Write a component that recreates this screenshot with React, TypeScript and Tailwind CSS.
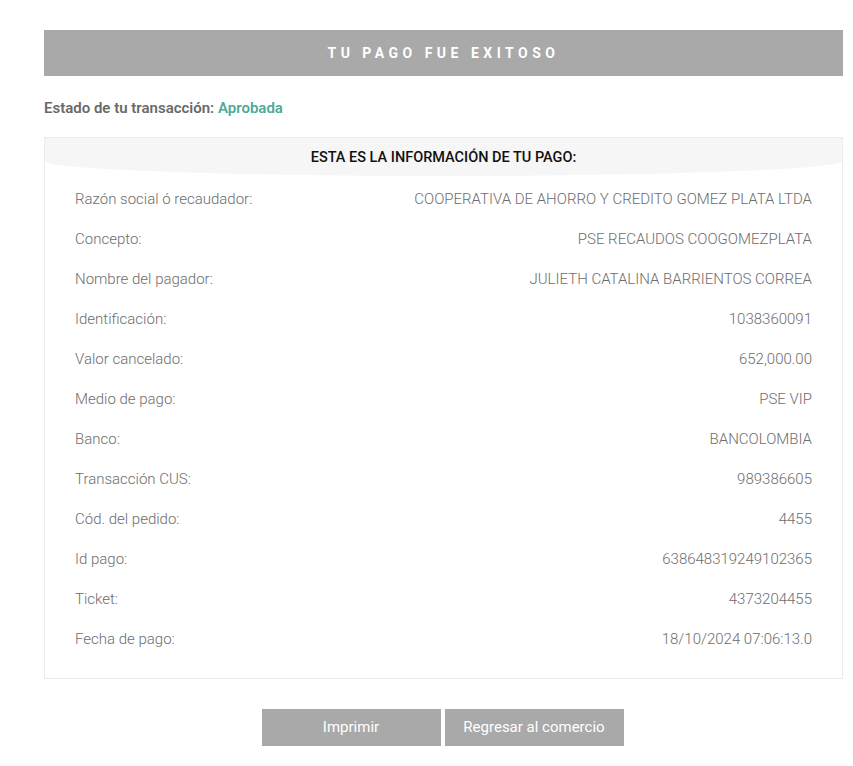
const rows: [string, string][] = [
  ['Razón social ó recaudador:', 'COOPERATIVA DE AHORRO Y CREDITO GOMEZ PLATA LTDA'],
  ['Concepto:', 'PSE RECAUDOS COOGOMEZPLATA'],
  ['Nombre del pagador:', 'JULIETH CATALINA BARRIENTOS CORREA'],
  ['Identificación:', '1038360091'],
  ['Valor cancelado:', '652,000.00'],
  ['Medio de pago:', 'PSE VIP'],
  ['Banco:', 'BANCOLOMBIA'],
  ['Transacción CUS:', '989386605'],
  ['Cód. del pedido:', '4455'],
  ['Id pago:', '638648319249102365'],
  ['Ticket:', '4373204455'],
  ['Fecha de pago:', '18/10/2024 07:06:13.0'],
]

export default function App() {
  return (
    <div className="min-h-screen bg-white font-['Roboto',sans-serif] text-[#6d6d6d]">
      <div className="ml-[44px] w-[799px] pt-[30px] pb-[20px]">
        {/* Banner */}
        <div className="h-[46px] bg-[#a9a9a9] flex items-center justify-center">
          <h1 className="text-white text-[14px] font-bold tracking-[4.5px]">TU PAGO FUE EXITOSO</h1>
        </div>

        <p className="mt-[21px] text-[15px] font-semibold text-[#6a6a6a]">
          Estado de tu transacción: <span className="text-[#4ea99b]">Aprobada</span>
        </p>

        {/* Info card */}
        <div className="mt-[17px] border border-[#ececec] pb-[18px]">
          <div className="h-[38px] bg-[#f6f6f6] rounded-b-[50%_15px] flex items-start justify-center pt-[9px]">
            <h2 className="text-[14.5px] font-medium text-[#111]">ESTA ES LA INFORMACIÓN DE TU PAGO:</h2>
          </div>
          <div className="mt-[4px] px-[30px]">
            {rows.map(([label, value]) => (
              <div key={label} className="h-[40px] flex items-center justify-between text-[15px] font-light">
                <span>{label}</span>
                <span>{value}</span>
              </div>
            ))}
          </div>
        </div>

        {/* Actions */}
        <div className="mt-[30px] flex justify-center gap-[4px] pr-[2px]">
          <button className="w-[179px] h-[37px] bg-[#a9a9a9] text-white text-[15px]">Imprimir</button>
          <button className="w-[179px] h-[37px] bg-[#a9a9a9] text-white text-[15px]">Regresar al comercio</button>
        </div>
      </div>
    </div>
  )
}
